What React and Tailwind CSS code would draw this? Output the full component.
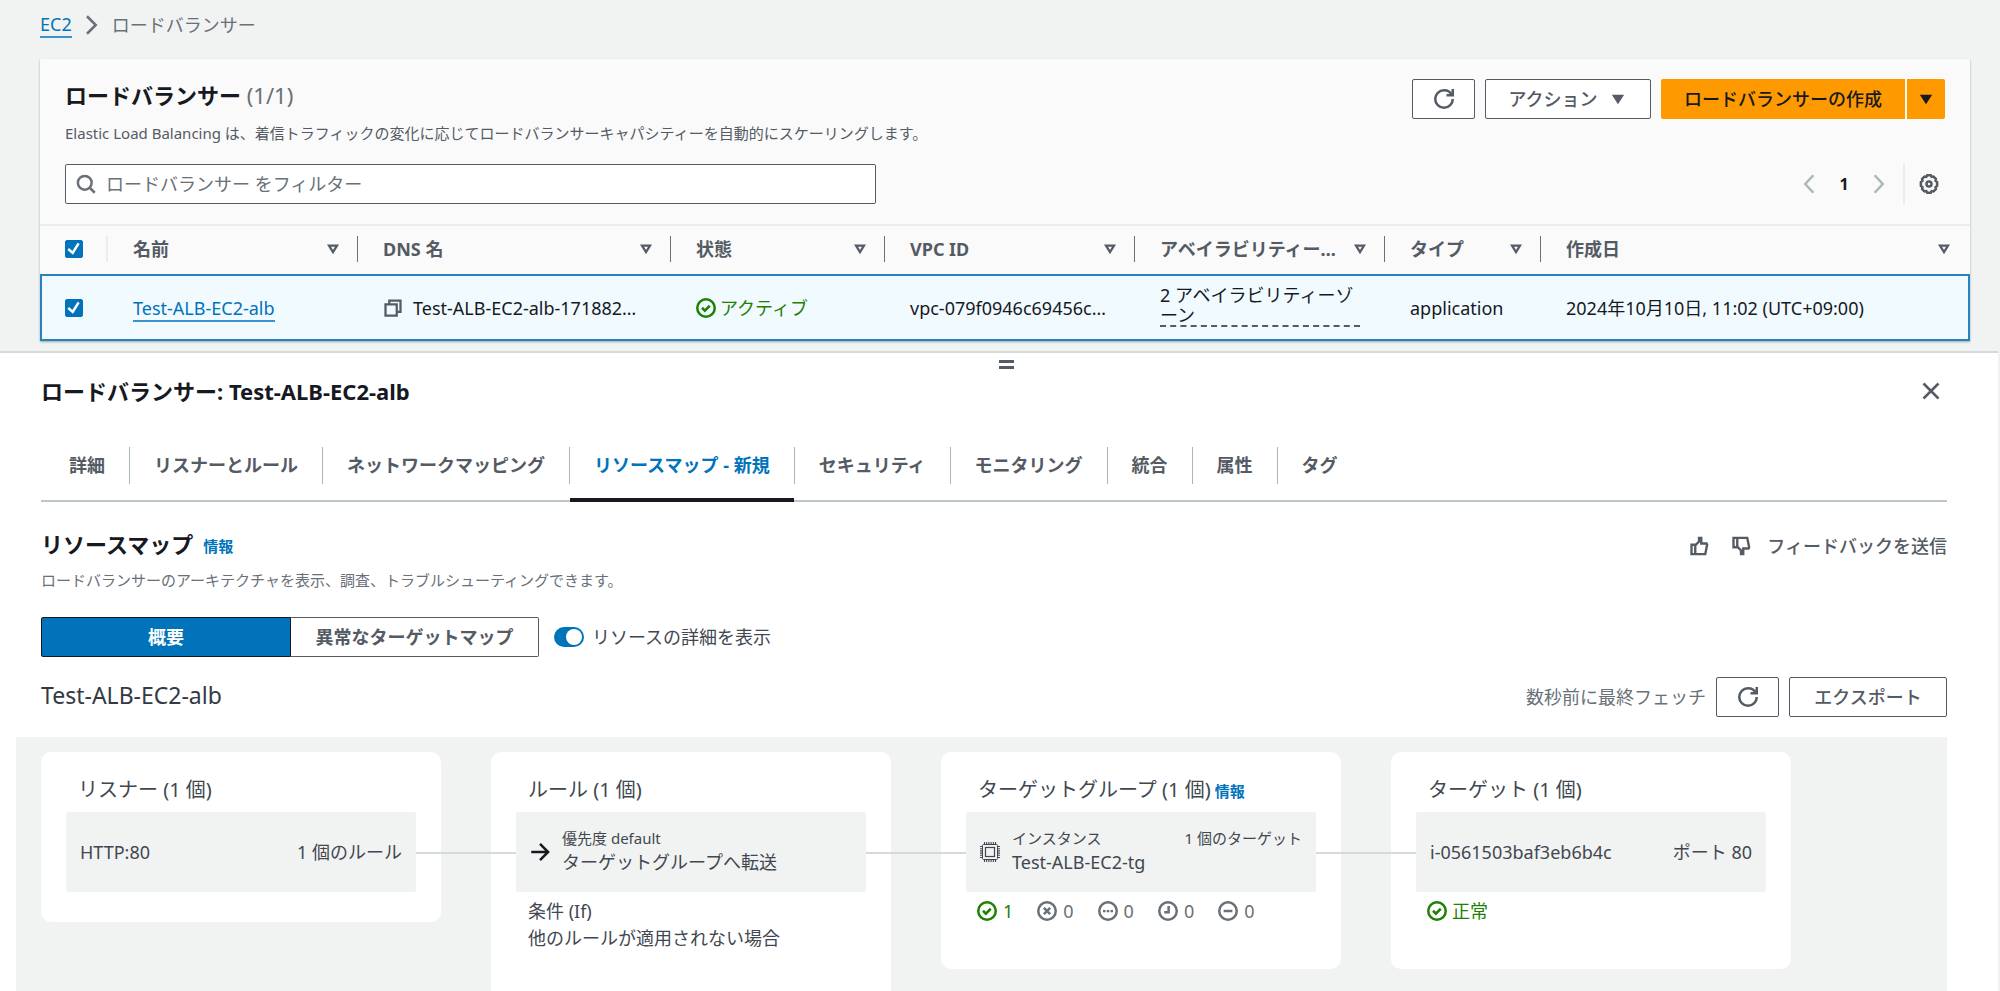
import { useState } from "react";

const columns = [
  { label: "名前", width: "w-[250px]" },
  { label: "DNS 名", width: "w-[313px]" },
  { label: "状態", width: "w-[214px]" },
  { label: "VPC ID", width: "w-[250px]" },
  { label: "アベイラビリティー…", width: "w-[250px]" },
  { label: "タイプ", width: "w-[156px]" },
  { label: "作成日", width: "" },
];

const tabs = [
  "詳細",
  "リスナーとルール",
  "ネットワークマッピング",
  "リソースマップ - 新規",
  "セキュリティ",
  "モニタリング",
  "統合",
  "属性",
  "タグ",
];

const targetCounts = [
  { id: "healthy", count: 1, color: "text-[#1d8102]" },
  { id: "unhealthy", count: 0, color: "text-[#687078]" },
  { id: "unused", count: 0, color: "text-[#687078]" },
  { id: "initial", count: 0, color: "text-[#687078]" },
  { id: "draining", count: 0, color: "text-[#687078]" },
];

function Icon({ children, className = "size-5" }) {
  return (
    <svg
      viewBox="0 0 16 16"
      fill="none"
      stroke="currentColor"
      strokeWidth="2"
      className={`shrink-0 ${className}`}
      aria-hidden="true"
    >
      {children}
    </svg>
  );
}

function RefreshIcon() {
  return (
    <Icon>
      <path d="M10 5h5V0" />
      <path d="M15 8a6.95 6.95 0 0 1-7 7 6.95 6.95 0 0 1-7-7 6.95 6.95 0 0 1 7-7c2.8 0 5.3 1.6 6.4 4" />
    </Icon>
  );
}

function StatusIcon({ type }) {
  return (
    <Icon>
      <circle cx="8" cy="8" r="7" />
      {type === "healthy" && <path d="m4.8 7.8 2.3 2.3 3.9-3.9" />}
      {type === "unhealthy" && <path d="m5.5 5.5 5 5M10.5 5.5l-5 5" />}
      {type === "unused" && <path d="M4 8h2M7 8h2M10 8h2" strokeWidth="1.8" />}
      {type === "initial" && <path d="M8.5 4v5H5" />}
      {type === "draining" && <path d="M4.5 8h7" />}
    </Icon>
  );
}

function CaretIcon({ filled }) {
  return (
    <Icon>
      {filled ? (
        <path d="M4 5h8l-4 6.2z" fill="currentColor" strokeWidth="1" />
      ) : (
        <path d="M4.8 5.2h6.4L8 10.4z" strokeWidth="1.8" />
      )}
    </Icon>
  );
}

function ChipIcon() {
  return (
    <svg viewBox="0 0 20 20" fill="none" stroke="currentColor" className="size-5 shrink-0" aria-hidden="true">
      <rect x="2.5" y="2.5" width="15" height="15" rx="1" strokeWidth="1" />
      <rect x="5.5" y="5.5" width="9" height="9" strokeWidth="1.2" />
      <path
        d="M4.500 0v3M6.700 0v3M8.900 0v3M11.100 0v3M13.300 0v3M15.500 0v3M4.500 17v3M6.700 17v3M8.900 17v3M11.100 17v3M13.300 17v3M15.500 17v3M0 4.500h3M0 6.700h3M0 8.900h3M0 11.100h3M0 13.300h3M0 15.500h3M17 4.500h3M17 6.700h3M17 8.900h3M17 11.100h3M17 13.300h3M17 15.500h3"
        strokeWidth="1.1"
      />
    </svg>
  );
}

function Checkbox({ label, checked, onChange }) {
  return (
    <label className="grid size-[18px] place-items-center">
      <input
        type="checkbox"
        aria-label={label}
        checked={checked}
        onChange={onChange}
        className="col-start-1 row-start-1 size-[18px] appearance-none rounded-xs border border-[#687078] bg-white checked:border-[#0073bb] checked:bg-[#0073bb]"
      />
      {checked && (
        <svg viewBox="0 0 14 14" className="pointer-events-none col-start-1 row-start-1 size-[18px]" aria-hidden="true">
          <path d="M2.5 7 6 10l4.6-7.4" fill="none" stroke="#fff" strokeWidth="2" />
        </svg>
      )}
    </label>
  );
}

function MapCard({ title, info, children, height, connected }) {
  return (
    <section className={`w-[400px] shrink-0 rounded-[10px] bg-white px-[25px] pt-5 ${height}`}>
      <h3 className="flex h-10 items-center gap-1 px-3 pb-1 text-[20px] text-[#414750]">
        {title}
        {info && (
          <a href="#info" className="pt-0.5 text-[15px] font-bold text-[#0073bb]">
            情報
          </a>
        )}
      </h3>
      <div className="relative">
        {children}
        {connected && <div className="absolute top-10 left-full h-0.5 w-[100px] bg-[#d5dbdb]" />}
      </div>
    </section>
  );
}

export default function App() {
  const [selected, setSelected] = useState(true);
  const [filter, setFilter] = useState("");
  const [activeTab, setActiveTab] = useState("リソースマップ - 新規");
  const [view, setView] = useState("overview");
  const [showDetails, setShowDetails] = useState(true);

  const toggleSelected = () => setSelected(!selected);

  return (
    <div
      lang="ja"
      className="flex h-screen flex-col overflow-hidden bg-[#f1f3f3] font-['Noto_Sans','Noto_Sans_CJK_JP',sans-serif] text-[18px] leading-6 text-[#16191f]"
    >
      <nav className="flex h-[59px] shrink-0 items-center gap-2.5 px-10 pb-2.5 text-[#687078]">
        <a href="#ec2" className="border-b-2 border-[#3a93cc] text-[#0073bb]">
          EC2
        </a>
        <Icon>
          <path d="M4 1l7 7-7 7" />
        </Icon>
        <span>ロードバランサー</span>
      </nav>

      <main className="mr-[30px] ml-10 bg-[#fafafa] shadow-[0_1px_2px_rgba(0,28,36,0.35)]">
        <header className="flex items-start justify-between px-[25px] pt-5">
          <div>
            <h1 className="text-[22px] leading-8 font-bold">
              ロードバランサー <span className="font-normal text-[#687078]">(1/1)</span>
            </h1>
            <p className="pt-2.5 pb-0.5 text-[15px] leading-6 text-[#545b64]">
              Elastic Load Balancing は、着信トラフィックの変化に応じてロードバランサーキャパシティーを自動的にスケーリングします。
            </p>
          </div>
          <div className="flex h-10 gap-2.5 font-medium text-[#545b64]">
            <button aria-label="更新" className="flex w-[63px] items-center justify-center rounded-xs border border-[#545b64] bg-white">
              <RefreshIcon />
            </button>
            <button className="flex w-[166px] items-center justify-center gap-2.5 rounded-xs border border-[#545b64] bg-white">
              アクション
              <CaretIcon filled />
            </button>
            <div className="flex gap-0.5 text-[#16191f]">
              <button className="w-[244px] rounded-l-xs bg-[#ff9900]">ロードバランサーの作成</button>
              <button aria-label="その他の作成オプション" className="flex w-[38px] items-center justify-center rounded-r-xs bg-[#ff9900]">
                <CaretIcon filled />
              </button>
            </div>
          </div>
        </header>

        <div className="flex items-center justify-between px-[25px] pt-[17px] pb-5">
          <label className="flex h-10 w-[811px] items-center gap-2.5 rounded-xs border border-[#545b64] bg-white px-2.5 text-[#687078]">
            <Icon>
              <circle cx="7" cy="7" r="5.5" />
              <path d="m15 15-4.2-4.2" />
            </Icon>
            <input
              type="text"
              value={filter}
              onChange={(e) => setFilter(e.target.value)}
              placeholder="ロードバランサー をフィルター"
              className="min-w-0 flex-1 outline-none placeholder:text-[#687078]"
            />
          </label>
          <div className="flex items-center pr-1.5">
            <button aria-label="前のページ" className="text-[#aab7b8]">
              <Icon>
                <path d="M11.5 1 5 8l6.5 7" />
              </Icon>
            </button>
            <button className="w-[50px] text-[16px] font-bold">1</button>
            <button aria-label="次のページ" className="text-[#aab7b8]">
              <Icon>
                <path d="m4.5 1 6.5 7-6.5 7" />
              </Icon>
            </button>
            <div className="ml-3.5 h-10 w-0.5 bg-[#eaeded]" />
            <button aria-label="設定" className="ml-3.5 text-[#545b64]">
              <Icon>
                <circle cx="8" cy="8" r="2" />
                <path d="M6.6 1h2.8l.7 1.3 1.5-.3 1.9 1.9-.3 1.5 1.3 1v3.2l-1.3 1 .3 1.5-1.9 1.9-1.5-.3-.7 1.3H6.6l-.7-1.3-1.5.3-1.9-1.9.3-1.5-1.3-1V6.4l1.3-1-.3-1.5L4.4 2l1.5.3z" />
              </Icon>
            </button>
          </div>
        </div>

        <table className="w-full table-fixed border-collapse">
          <thead>
            <tr className="h-[49px] border-t-2 border-[#eaeded] text-left text-[#545b64]">
              <th className="w-[68px] p-0 pb-0.5">
                <div className="flex h-[26px] items-center border-r-2 border-[#eaeded] pl-[25px]">
                  <Checkbox label="すべて選択" checked={selected} onChange={toggleSelected} />
                </div>
              </th>
              {columns.map((column, index) => (
                <th key={column.label} className={`p-0 pb-0.5 ${column.width}`}>
                  <div
                    className={`flex h-[26px] items-center justify-between pl-[25px] whitespace-nowrap ${
                      index < columns.length - 1 ? "border-r border-[#687078] pr-3.5" : "pr-4"
                    }`}
                  >
                    {column.label}
                    <CaretIcon />
                  </div>
                </th>
              ))}
            </tr>
          </thead>
          <tbody>
            <tr className="h-[67px] bg-[#f1faff] outline-2 -outline-offset-2 outline-[#2683bd]">
              <td className="p-0 pl-[25px]">
                <Checkbox label="Test-ALB-EC2-alb を選択" checked={selected} onChange={toggleSelected} />
              </td>
              <td className="p-0 pl-[25px]">
                <a href="#alb" className="border-b-2 border-[#3a93cc] text-[#0073bb]">
                  Test-ALB-EC2-alb
                </a>
              </td>
              <td className="p-0 pl-[25px]">
                <div className="flex items-center gap-2.5">
                  <button aria-label="DNS 名をコピー" className="text-[#545b64]">
                    <Icon>
                      <path d="M2 5h9v9H2zM5 5V2h9v9h-3" strokeWidth="1.8" />
                    </Icon>
                  </button>
                  Test-ALB-EC2-alb-171882…
                </div>
              </td>
              <td className="p-0 pl-[25px]">
                <div className="flex items-center gap-1 text-[#1d8102]">
                  <StatusIcon type="healthy" />
                  アクティブ
                </div>
              </td>
              <td className="p-0 pl-[25px] whitespace-nowrap">vpc-079f0946c69456c…</td>
              <td className="p-0 px-[25px] pb-1">
                <div className="border-b-2 border-dashed border-[#545b64] leading-5 [line-break:anywhere]">
                  2 アベイラビリティーゾーン
                </div>
              </td>
              <td className="p-0 pl-[25px]">application</td>
              <td className="p-0 pl-[25px]">2024年10月10日, 11:02 (UTC+09:00)</td>
            </tr>
          </tbody>
        </table>
      </main>

      <aside className="mt-2.5 mr-0.5 min-h-0 flex-1 overflow-hidden border-t-2 border-[#d5dbdb] bg-white">
        <button aria-label="パネルのサイズを変更" className="mt-[7px] ml-[50%] flex h-[9px] w-[15px] flex-col justify-between">
          <span className="h-[3px] w-full bg-[#545b64]" />
          <span className="h-[3px] w-full bg-[#545b64]" />
        </button>

        <div className="mr-[51px] ml-[41px]">
          <header className="flex h-11 items-center justify-between pr-1.5">
            <h2 className="text-[22px] font-bold">ロードバランサー: Test-ALB-EC2-alb</h2>
            <button aria-label="閉じる" className="text-[#545b64]">
              <Icon>
                <path d="m2 2 12 12M14 2 2 14" />
              </Icon>
            </button>
          </header>

          <div role="tablist" className="mt-6 flex h-[65px] items-start border-b-2 border-[#bcc6c7] pt-2.5 pl-1 font-bold text-[#545b64]">
            {tabs.map((tab, index) => (
              <div key={tab} className="flex">
                <button
                  role="tab"
                  aria-selected={tab === activeTab}
                  onClick={() => setActiveTab(tab)}
                  className={`-mb-0.5 h-[55px] border-b-4 px-6 pb-4 whitespace-nowrap ${
                    tab === activeTab ? "border-[#16191f] text-[#0073bb]" : "border-transparent"
                  }`}
                >
                  {tab}
                </button>
                {index < tabs.length - 1 && <span className="h-[37px] w-px bg-[#aab7b8]" />}
              </div>
            ))}
          </div>

          <div className="flex items-center justify-between pt-[26px]">
            <h2 className="flex items-center gap-2.5 text-[22px] leading-8 font-bold">
              リソースマップ
              <a href="#info" className="pt-1 text-[15px] leading-6 text-[#0073bb]">
                情報
              </a>
            </h2>
            <div className="flex items-center pt-1 font-medium text-[#545b64]">
              <button aria-label="良い" className="mr-[22px]">
                <Icon>
                  <path d="M2 7h3v7.5H2zM5 7.5l3-3v-3h1.8V6H14l.5 1-1.5 7.5H5" strokeWidth="1.9" />
                </Icon>
              </button>
              <button aria-label="悪い" className="mr-4">
                <Icon>
                  <path d="M2 1.5h3V9H2zM5 8.500l3 3v3h1.800V10H14l.5-1L13 1.500H5" strokeWidth="1.9" />
                </Icon>
              </button>
              <button>フィードバックを送信</button>
            </div>
          </div>
          <p className="pt-2 text-[15px] leading-6 text-[#687078]">
            ロードバランサーのアーキテクチャを表示、調査、トラブルシューティングできます。
          </p>

          <div className="flex items-center pt-[25px]">
            <div className="flex h-10 font-bold">
              <button
                onClick={() => setView("overview")}
                className={`w-[250px] rounded-l-xs border ${
                  view === "overview" ? "border-[#16191f] bg-[#0073bb] text-white" : "border-[#545b64] text-[#545b64]"
                }`}
              >
                概要
              </button>
              <button
                onClick={() => setView("unhealthy")}
                className={`w-[248px] rounded-r-xs border border-l-0 ${
                  view === "unhealthy" ? "border-[#16191f] bg-[#0073bb] text-white" : "border-[#545b64] text-[#545b64]"
                }`}
              >
                異常なターゲットマップ
              </button>
            </div>
            <label className="ml-[15px] flex items-center gap-2 text-[#414750]">
              <span className="grid items-center">
                <input
                  type="checkbox"
                  role="switch"
                  checked={showDetails}
                  onChange={(e) => setShowDetails(e.target.checked)}
                  className="peer col-start-1 row-start-1 h-5 w-[30px] appearance-none rounded-full bg-[#687078] checked:bg-[#0073bb]"
                />
                <span className="pointer-events-none col-start-1 row-start-1 ml-0.5 size-4 rounded-full bg-white peer-checked:ml-3" />
              </span>
              リソースの詳細を表示
            </label>
          </div>

          <div className="flex items-start justify-between pt-5">
            <h2 className="pt-1.5 text-[23px] text-[#333a43]">Test-ALB-EC2-alb</h2>
            <div className="flex h-10 items-center gap-2.5 text-[#687078]">
              数秒前に最終フェッチ
              <button aria-label="更新" className="flex h-10 w-[63px] items-center justify-center rounded-xs border border-[#545b64] text-[#545b64]">
                <RefreshIcon />
              </button>
              <button className="h-10 w-[158px] rounded-xs border border-[#545b64] font-medium text-[#545b64]">エクスポート</button>
            </div>
          </div>
        </div>

        <div className="mt-5 mr-[51px] ml-4 flex h-[400px] items-start gap-[50px] bg-[#f1f3f3] px-[25px] pt-[15px] text-[#414750]">
          <MapCard title="リスナー (1 個)" height="h-[170px]" connected>
            <div className="flex h-20 items-center justify-between rounded-xs bg-[#f1f3f3] px-3.5">
              <span>HTTP:80</span>
              <span>1 個のルール</span>
            </div>
          </MapCard>

          <MapCard title="ルール (1 個)" height="h-[260px]" connected>
            <div className="flex h-20 items-center gap-3 rounded-xs bg-[#f1f3f3] px-3.5">
              <Icon className="size-5 text-[#16191f]">
                <path d="M1 8h13M8 1.5 14.5 8 8 14.5" />
              </Icon>
              <div className="pb-1">
                <p className="text-[15px]">優先度 default</p>
                <p>ターゲットグループへ転送</p>
              </div>
            </div>
            <div className="px-3 pt-1.5 leading-[27px]">
              <p>条件 (If)</p>
              <p>他のルールが適用されない場合</p>
            </div>
          </MapCard>

          <MapCard title="ターゲットグループ (1 個)" info height="h-[217px]" connected>
            <div className="flex h-20 items-center gap-3 rounded-xs bg-[#f1f3f3] px-3.5">
              <ChipIcon />
              <div className="flex-1 pb-1">
                <p className="flex justify-between text-[15px]">
                  <span>インスタンス</span>
                  <span>1 個のターゲット</span>
                </p>
                <p>Test-ALB-EC2-tg</p>
              </div>
            </div>
            <div className="flex gap-6 px-[11px] pt-[7px]">
              {targetCounts.map((target) => (
                <span key={target.id} className={`flex items-center gap-1.5 ${target.color}`}>
                  <StatusIcon type={target.id} />
                  {target.count}
                </span>
              ))}
            </div>
          </MapCard>

          <MapCard title="ターゲット (1 個)" height="h-[217px]">
            <div className="flex h-20 items-center justify-between rounded-xs bg-[#f1f3f3] px-3.5">
              <span>i-0561503baf3eb6b4c</span>
              <span>ポート 80</span>
            </div>
            <div className="flex items-center gap-[5px] px-[11px] pt-[7px] text-[#1d8102]">
              <StatusIcon type="healthy" />
              正常
            </div>
          </MapCard>
        </div>
      </aside>
    </div>
  );
}
